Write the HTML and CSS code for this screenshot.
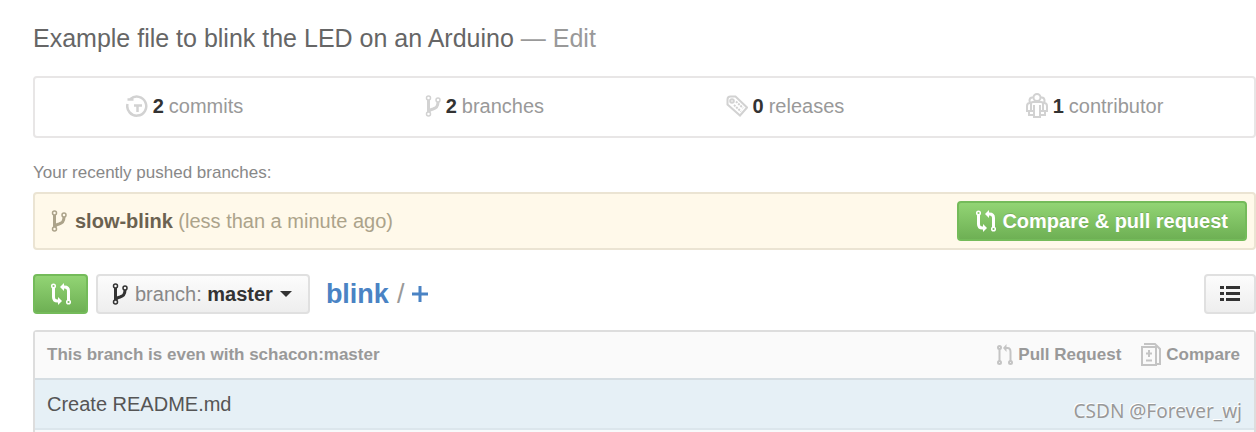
FILE: index.html
```html
<!DOCTYPE html>
<html lang="en">

<head>
    <meta charset="UTF-8">
    <meta name="viewport" content="width=device-width, initial-scale=1.0">
    <title>blink</title>
    <link rel="stylesheet" href="styles.css">
</head>

<body>
    <!-- shared icons -->
    <svg class="icon-defs" aria-hidden="true">
        <symbol id="icon-branch" viewBox="0 0 16 22">
            <g fill="none" stroke="currentColor">
                <g stroke-width="1.500">
                    <circle cx="3.500" cy="3" r="2"></circle>
                    <circle cx="3.500" cy="19" r="2"></circle>
                    <circle cx="13" cy="5" r="2"></circle>
                </g>
                <path d="M3.500 5v12M13 7c0 5-2 6-5 7q-4 1-4 3" stroke-width="3"></path>
            </g>
        </symbol>
        <symbol id="icon-compare" viewBox="0 0 22 22">
            <g fill="none" stroke="currentColor">
                <circle cx="3.500" cy="3" r="1.800" stroke-width="1.500"></circle>
                <circle cx="18.500" cy="19" r="1.800" stroke-width="1.500"></circle>
                <path d="M3.500 5v9q0 4 4 4h1M18.500 17V8q0-4-4-4h-1" stroke-width="3"></path>
            </g>
            <path d="M8 14v8l4-4zM14 0v8l-4-4z" fill="currentColor"></path>
        </symbol>
    </svg>

    <div class="page">
        <div class="description">Example file to blink the LED on an Arduino <span class="muted">— <a href="#">Edit</a></span></div>

        <ul class="summary">
            <li><a href="#">
                <svg class="icon" width="22" height="22" viewBox="0 0 22 22" fill="none" stroke="currentColor" stroke-width="2.500">
                    <path d="M4.500 4A9.500 9.500 0 1 1 1.500 9M1.500 4.500h6M11.500 17v-6.500H16M8 10.500h4"></path>
                </svg>
                <strong>2</strong> commits</a></li>
            <li><a href="#">
                <svg class="icon" width="16" height="22"><use href="#icon-branch"></use></svg>
                <strong>2</strong> branches</a></li>
            <li><a href="#">
                <svg class="icon" width="22" height="22" viewBox="0 0 22 22" fill="none" stroke="currentColor" stroke-width="2">
                    <path d="M1.500 4.500q0-3 3-3h5l11.500 11-7 8L1.500 9.500z"></path>
                    <circle cx="6" cy="6" r="1.800"></circle>
                    <path d="M10 6.500l7 6.500M8 10l7 6.500" stroke-dasharray="2 1"></path>
                </svg>
                <strong>0</strong> releases</a></li>
            <li><a href="#">
                <svg class="icon" width="22" height="26" viewBox="0 0 22 26" fill="none" stroke="currentColor" stroke-width="2">
                    <circle cx="11" cy="4.500" r="3.500"></circle>
                    <path d="M7 4.500a3 3 0 1 0-1 6M15 4.500a3 3 0 1 1 1 6"></path>
                    <path d="M7 9h8q2 0 2 2v7h-3v6H8v-6H5v-7q0-2 2-2zM8 12v6M14 12v6"></path>
                    <path d="M4 10q-3 0-3 3v5h2v4h4M18 10q3 0 3 3v5h-2v4h-4"></path>
                </svg>
                <strong>1</strong> contributor</a></li>
        </ul>

        <div class="pushed-title">Your recently pushed branches:</div>
        <div class="pushed">
            <div class="pushed-branch">
                <svg class="icon" width="16" height="22"><use href="#icon-branch"></use></svg>
                <span><a href="#">slow-blink</a> (less than a minute ago)</span>
            </div>
            <button type="button" class="btn btn-green">
                <svg class="icon" width="22" height="22"><use href="#icon-compare"></use></svg>
                Compare &amp; pull request
            </button>
        </div>

        <div class="toolbar">
            <button type="button" class="btn btn-green btn-icon" aria-label="Compare">
                <svg class="icon" width="22" height="22"><use href="#icon-compare"></use></svg>
            </button>
            <button type="button" class="btn btn-branch">
                <svg class="icon" width="16" height="22"><use href="#icon-branch"></use></svg>
                <span>branch: <strong>master</strong></span>
                <span class="caret"></span>
            </button>
            <div class="breadcrumb">
                <a class="repo" href="#">blink</a>
                <span>/</span>
                <a href="#" aria-label="New file"><svg class="icon" width="16" height="16" viewBox="0 0 16 16"><path d="M8 0v16M0 8h16" stroke="currentColor" stroke-width="3"></path></svg></a>
            </div>
            <button type="button" class="btn btn-list" aria-label="List">
                <svg class="icon" width="20" height="16" viewBox="0 0 20 16" fill="currentColor">
                    <path d="M0 0h4v3H0zM6 0h14v3H6zM0 6h4v3H0zM6 6h14v3H6zM0 12h4v3H0zM6 12h14v3H6z"></path>
                </svg>
            </button>
        </div>

        <div class="files">
            <div class="files-head">
                <span>This branch is even with schacon:master</span>
                <div class="files-links">
                    <a href="#">
                        <svg class="icon" width="16" height="22" viewBox="0 0 16 22" fill="none" stroke="currentColor" stroke-width="2">
                            <circle cx="2.500" cy="3.500" r="1.500"></circle>
                            <circle cx="2.500" cy="18.500" r="1.500"></circle>
                            <circle cx="13.500" cy="18.500" r="1.500"></circle>
                            <path d="M2.500 5v12M13.500 17V8q0-4-3-4H9"></path>
                            <path d="M9.500 0v8L6 4z" fill="currentColor" stroke="none"></path>
                        </svg>
                        Pull Request</a>
                    <a href="#">
                        <svg class="icon" width="20" height="24" viewBox="0 0 20 24" fill="none" stroke="currentColor" stroke-width="2">
                            <path d="M1 4h14v18H1z"></path>
                            <path d="M3 1h11l5 5v15h-3M8 7v7M5 10.500h6M5 17.500h6"></path>
                        </svg>
                        Compare</a>
                </div>
            </div>
            <div class="commit"><a href="#">Create README.md</a></div>
        </div>
    </div>
    <div class="watermark">CSDN @Forever_wj</div>
</body>

</html>
```

FILE: styles.css
```css
* {
    box-sizing: border-box;
}

body {
    margin: 0;
    background: #fff;
    color: #666;
    font-family: "Liberation Sans", Arial, sans-serif;
    font-size: 20px;
    line-height: 24px;
}

a {
    color: inherit;
    text-decoration: none;
}

.icon-defs {
    display: none;
}

.icon {
    display: block;
    flex: none;
}

.page {
    display: flex;
    flex-direction: column;
    min-height: 100vh;
    padding: 24px 0 0 33px;
}

.description {
    font-size: 25px;
    line-height: 28px;
}

.muted {
    color: #999;
}

.summary {
    display: flex;
    margin: 24px 0 0;
    padding: 0;
    border: 2px solid #e8e6e6;
    border-radius: 4px;
    list-style: none;
}

.summary li {
    flex: 1 1 auto;
}

.summary a {
    display: flex;
    align-items: center;
    justify-content: center;
    gap: 5px;
    height: 58px;
    padding-bottom: 2px;
    color: #999;
}

.summary strong {
    color: #333;
}

.summary .icon {
    color: #d2d2d2;
}

.pushed-title {
    margin: 23px 0 7px;
    color: #888;
    font-size: 17px;
}

.pushed {
    display: flex;
    align-items: center;
    justify-content: space-between;
    padding: 7px 7px 7px 16px;
    border: 2px solid #ebe4d3;
    border-radius: 4px;
    background: #fff9ea;
    color: #aca38a;
}

.pushed-branch {
    display: flex;
    align-items: center;
    gap: 8px;
}

.pushed-branch a {
    color: #6b6250;
    font-weight: bold;
}

.btn {
    display: flex;
    align-items: center;
    justify-content: center;
    gap: 5px;
    height: 40px;
    padding: 0 17px 0 16px;
    border: 2px solid #e0e0e0;
    border-radius: 4px;
    background: linear-gradient(#fcfcfc, #eee);
    color: #333;
    font: inherit;
    cursor: pointer;
}

.btn-green {
    border-color: #74bb5a;
    background: linear-gradient(#92d474, #6eb054);
    color: #fff;
    font-weight: bold;
    text-shadow: 0 -1px 0 rgba(0, 0, 0, 0.15);
}

.toolbar {
    display: flex;
    align-items: center;
    margin: 24px 0 16px;
}

.btn-icon {
    width: 55px;
    margin-right: 8px;
    padding: 0;
}

.btn-branch {
    gap: 7px;
    padding: 0 16px 0 14px;
    color: #888;
}

.btn-branch .icon,
.btn-branch strong {
    color: #333;
}

.caret {
    border: 6px solid transparent;
    border-top-color: #333;
    border-bottom: 0;
}

.breadcrumb {
    display: flex;
    align-items: center;
    gap: 8px;
    margin-left: 16px;
    color: #999;
    font-size: 27px;
}

.breadcrumb a {
    color: #4a83c4;
}

.repo {
    font-weight: bold;
}

.btn-list {
    width: 52px;
    margin-left: auto;
    padding: 0;
}

.files {
    flex: 1;
    border: 2px solid #ddd;
    border-bottom: 0;
    border-radius: 4px 4px 0 0;
    background: #f8fafb;
}

.files-head {
    display: flex;
    align-items: center;
    justify-content: space-between;
    height: 48px;
    padding: 0 14px 0 12px;
    border-bottom: 2px solid #d5dde2;
    background: #fafafa;
    color: #999;
    font-size: 17px;
    font-weight: bold;
}

.files-links {
    display: flex;
    gap: 20px;
}

.files-links a {
    display: flex;
    align-items: center;
    gap: 5px;
}

.files-links .icon {
    color: #c4c4c4;
}

.commit {
    padding: 12px;
    border-bottom: 2px solid #dce6ec;
    background: #e6f0f6;
    color: #555;
}

.watermark {
    position: absolute;
    right: 14px;
    bottom: 9px;
    color: #999;
    font-family: "Noto Sans", sans-serif;
    font-size: 19px;
    text-shadow: -1px -1px 0 #fff;
}
```
